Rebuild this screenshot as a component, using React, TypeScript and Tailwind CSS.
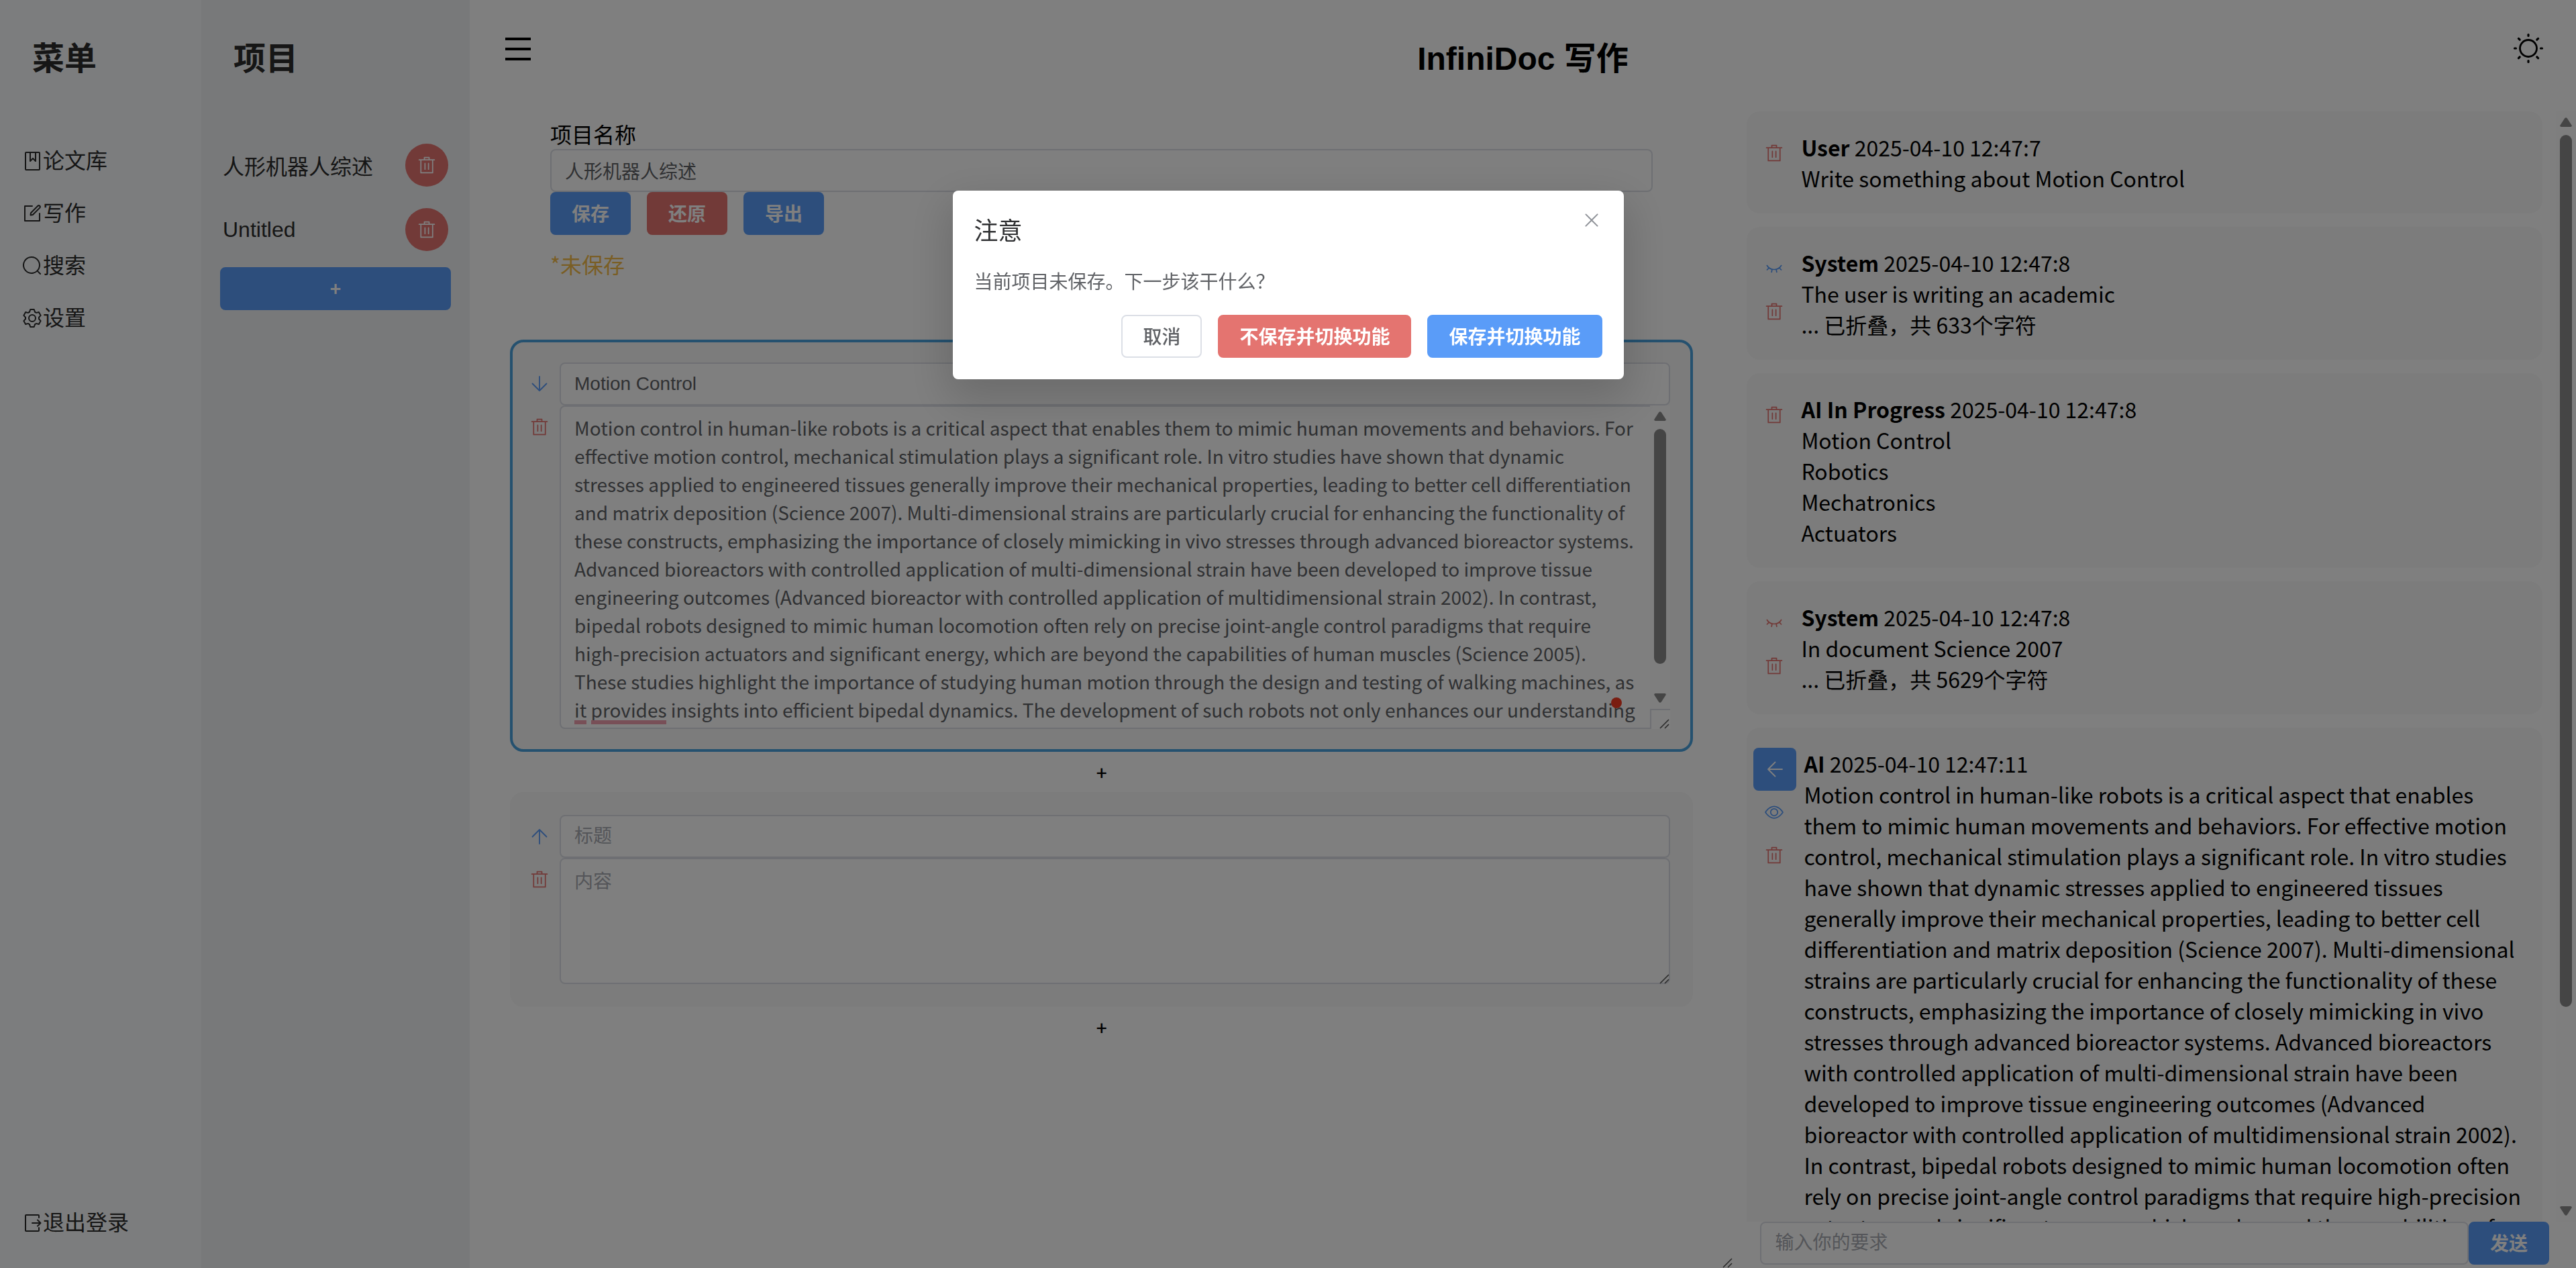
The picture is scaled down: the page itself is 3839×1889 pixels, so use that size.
import React from "react";

type IconProps = { className?: string };

function Glyph({ d, className = "size-7" }: IconProps & { d: string[] }) {
  return (
    <svg viewBox="0 0 1024 1024" className={className} fill="currentColor" aria-hidden="true">
      {d.map((p) => (
        <path key={p} d={p} />
      ))}
    </svg>
  );
}

const DELETE = [
  "M160 256H96a32 32 0 0 1 0-64h256V95.936a32 32 0 0 1 32-32h256a32 32 0 0 1 32 32V192h256a32 32 0 1 1 0 64h-64v672a32 32 0 0 1-32 32H192a32 32 0 0 1-32-32zm448-64v-64H416v64zM224 896h576V256H224zm192-128a32 32 0 0 1-32-32V416a32 32 0 0 1 64 0v320a32 32 0 0 1-32 32m192 0a32 32 0 0 1-32-32V416a32 32 0 0 1 64 0v320a32 32 0 0 1-32 32",
];
const EDIT = [
  "M832 512a32 32 0 1 1 64 0v352a32 32 0 0 1-32 32H160a32 32 0 0 1-32-32V160a32 32 0 0 1 32-32h352a32 32 0 0 1 0 64H192v640h640z",
  "m469.952 554.24 52.8-7.552L847.104 222.4a32 32 0 1 0-45.248-45.248L477.44 501.44l-7.552 52.8zm422.4-422.4a96 96 0 0 1 0 135.808l-331.84 331.84a32 32 0 0 1-18.112 9.088L436.8 623.68a32 32 0 0 1-36.224-36.224l15.104-105.6a32 32 0 0 1 9.024-18.112l331.904-331.84a96 96 0 0 1 135.744 0z",
];
const SEARCH = [
  "m795.904 750.72 124.992 124.928a32 32 0 0 1-45.248 45.248L750.656 795.904a416 416 0 1 1 45.248-45.248zM480 832a352 352 0 1 0 0-704 352 352 0 0 0 0 704",
];
const SETTING = [
  "M600.704 64a32 32 0 0 1 30.464 22.208l35.2 109.376c14.784 7.232 28.928 15.36 42.432 24.512l112.384-24.192a32 32 0 0 1 34.432 15.36L944.32 364.8a32 32 0 0 1-4.032 37.504l-77.12 85.12a357 357 0 0 1 0 49.024l77.12 85.248a32 32 0 0 1 4.032 37.504l-88.704 153.6a32 32 0 0 1-34.432 15.296L708.8 803.904c-13.44 9.088-27.648 17.28-42.368 24.512l-35.264 109.376A32 32 0 0 1 600.704 960H423.296a32 32 0 0 1-30.464-22.208L357.696 828.48a352 352 0 0 1-42.56-24.64l-112.32 24.256a32 32 0 0 1-34.432-15.36L79.68 659.2a32 32 0 0 1 4.032-37.504l77.12-85.248a357 357 0 0 1 0-48.896l-77.12-85.248A32 32 0 0 1 79.68 364.8l88.704-153.6a32 32 0 0 1 34.432-15.296l112.32 24.256c13.568-9.152 27.776-17.408 42.56-24.64l35.2-109.312A32 32 0 0 1 423.232 64H600.64zm-23.424 64H446.72l-36.352 113.088-24.512 11.968a294 294 0 0 0-34.816 20.096l-22.656 15.36-116.224-25.088-65.28 113.152 79.68 88.192-1.92 27.136a293 293 0 0 0 0 40.192l1.92 27.136-79.808 88.192 65.344 113.152 116.224-25.024 22.656 15.296a294 294 0 0 0 34.816 20.096l24.512 11.968L446.72 896h130.688l36.48-113.152 24.448-11.904a288 288 0 0 0 34.752-20.096l22.592-15.296 116.288 25.024 65.28-113.152-79.744-88.192 1.92-27.136a293 293 0 0 0 0-40.256l-1.92-27.136 79.808-88.128-65.344-113.152-116.288 24.96-22.592-15.232a288 288 0 0 0-34.752-20.096l-24.448-11.904L577.344 128zM512 320a192 192 0 1 1 0 384 192 192 0 0 1 0-384m0 64a128 128 0 1 0 0 256 128 128 0 0 0 0-256",
];
const VIEW = [
  "M512 160c320 0 512 352 512 352S832 864 512 864 0 512 0 512s192-352 512-352m0 64c-225.28 0-384.128 208.064-436.8 288 52.608 79.872 211.456 288 436.8 288 225.28 0 384.128-208.064 436.8-288-52.608-79.872-211.456-288-436.8-288m0 64a224 224 0 1 1 0 448 224 224 0 0 1 0-448m0 64a160.19 160.19 0 0 0-160 160c0 88.192 71.744 160 160 160s160-71.808 160-160-71.744-160-160-160",
];
const CLOSE = [
  "M764.288 214.592 512 466.88 259.712 214.592a31.936 31.936 0 0 0-45.12 45.12L466.752 512 214.528 764.224a31.936 31.936 0 1 0 45.12 45.184L512 557.184l252.288 252.288a31.936 31.936 0 0 0 45.12-45.12L557.12 512.064l252.288-252.352a31.936 31.936 0 1 0-45.12-45.184z",
];

const ARROWS = {
  down: "M14 3v21M3.500 13.500 14 24l10.500-10.500",
  up: "M14 25V4M3.500 14.500 14 4l10.500 10.500",
  left: "M25 14H4M14.500 3.500 4 14l10.500 10.500",
};

function ArrowIcon({ to }: { to: keyof typeof ARROWS }) {
  return (
    <svg viewBox="0 0 28 28" className="size-7" fill="none" stroke="currentColor" strokeWidth="1.800" strokeLinecap="round" strokeLinejoin="round" aria-hidden="true">
      <path d={ARROWS[to]} />
    </svg>
  );
}

function NotebookIcon() {
  return (
    <svg viewBox="0 0 32 32" className="size-8" fill="none" stroke="currentColor" strokeWidth="2" strokeLinejoin="round" aria-hidden="true">
      <rect x="6" y="3" width="21" height="26" rx="1" />
      <path d="M13 3v13l4-4 4 4V3" />
    </svg>
  );
}

function ExitIcon() {
  return (
    <svg viewBox="0 0 32 32" className="size-8" fill="none" stroke="currentColor" strokeWidth="2" strokeLinecap="round" strokeLinejoin="round" aria-hidden="true">
      <path d="M26 8V5a1 1 0 0 0-1-1H7a1 1 0 0 0-1 1v22a1 1 0 0 0 1 1h18a1 1 0 0 0 1-1v-4" />
      <path d="M16 16h12M24 11.500l4.500 4.500-4.500 4.500" />
    </svg>
  );
}

function ClosedEyeIcon() {
  return (
    <svg viewBox="0 0 28 28" className="size-7" fill="none" stroke="currentColor" strokeWidth="1.700" aria-hidden="true">
      <path d="M3 9c2.500 4.300 6.500 6.500 11 6.500S22.500 13.300 25 9" />
      <path d="M6.500 12.800 3 16.500M21.500 12.800l3.500 3.700M11 15l-1 5M17 15l1 5" />
    </svg>
  );
}

function SunIcon() {
  return (
    <svg viewBox="0 0 48 48" className="size-12" fill="none" stroke="currentColor" strokeLinecap="round" aria-hidden="true">
      <circle cx="24" cy="24" r="12.500" strokeWidth="2.800" />
      <path
        strokeWidth="3.200"
        d="M24 3.500v2M24 42.500v2M3.500 24h2M42.500 24h2M9.400 9.400l1.800 1.800M36.800 36.800l1.800 1.800M9.400 38.600l1.800-1.800M36.800 11.200l1.800-1.800"
      />
    </svg>
  );
}

function MenuIcon() {
  return (
    <svg viewBox="0 0 38 34" className="h-[34px] w-[38px]" fill="currentColor" aria-hidden="true">
      <rect y="0" width="38" height="4" />
      <rect y="15" width="38" height="4" />
      <rect y="30" width="38" height="4" />
    </svg>
  );
}

function Grip() {
  return (
    <svg viewBox="0 0 16 16" className="size-4 text-[#555]" fill="none" stroke="currentColor" strokeWidth="1.600" aria-hidden="true">
      <path d="M1 15 14 2M8 15l6-6" />
    </svg>
  );
}

function Arrow({ down = false }: { down?: boolean }) {
  return (
    <svg viewBox="0 0 18 14" className="h-[14px] w-[18px] shrink-0" fill="currentColor" aria-hidden="true">
      {down ? (
        <path d="M2 0h14q2.500.5 1.500 2.500l-6.500 10q-2 2.500-4 0l-6.500-10Q-.5.5 2 0z" />
      ) : (
        <path d="M2 14h14q2.500-.5 1.500-2.500L11 1.500q-2-2.500-4 0L.5 11.500Q-.5 13.500 2 14z" />
      )}
    </svg>
  );
}

function Scrollbar({ thumb }: { thumb: string }) {
  return (
    <div className="flex w-[30px] shrink-0 flex-1 flex-col items-center gap-3 bg-[#fcfcfc] py-[9px] text-[#8b8b8b]">
      <Arrow />
      <div className="flex w-[18px] flex-1 flex-col">
        <div className={`w-full rounded-full bg-[#8b8b8b] ${thumb}`} />
      </div>
      <Arrow down />
    </div>
  );
}

const sans = "font-['Liberation_Sans','Noto_Sans_CJK_SC',sans-serif]";
const cjk = "font-['Noto_Sans_CJK_SC',sans-serif]";

const field =
  "block w-full border-2 border-[#dcdfe6] bg-white px-5 text-[28px] text-[#606266] outline-none placeholder:text-[#a8abb2]";

function Button({ tone, className = "", children }: { tone: "primary" | "danger" | "plain"; className?: string; children: React.ReactNode }) {
  const tones = {
    primary: "border-[#5a9cf8] bg-[#5a9cf8] font-semibold text-white",
    danger: "border-[#e47470] bg-[#e47470] font-semibold text-white",
    plain: "border-[#dcdfe6] bg-white font-medium text-[#606266]",
  };
  return (
    <button
      type="button"
      className={`flex h-16 items-center justify-center rounded-lg border-2 px-[30px] pb-[3px] text-[28px] leading-none whitespace-nowrap ${cjk} ${tones[tone]} ${className}`}
    >
      {children}
    </button>
  );
}

function IconButton({ label, tone, children }: { label: string; tone: "blue" | "red"; children: React.ReactNode }) {
  return (
    <button
      type="button"
      aria-label={label}
      className={`flex h-16 w-full items-center justify-center ${tone === "blue" ? "text-[#5a9cf8]" : "text-[#e47470]"}`}
    >
      {children}
    </button>
  );
}

const menu = [
  { label: "论文库", icon: <NotebookIcon /> },
  { label: "写作", icon: <Glyph d={EDIT} className="size-8" /> },
  { label: "搜索", icon: <Glyph d={SEARCH} className="size-8" /> },
  { label: "设置", icon: <Glyph d={SETTING} className="size-8" /> },
];

const INTRO =
  "Motion control in human-like robots is a critical aspect that enables them to mimic human movements and behaviors. For effective motion control, mechanical stimulation plays a significant role. In vitro studies have shown that dynamic stresses applied to engineered tissues generally improve their mechanical properties, leading to better cell differentiation and matrix deposition (Science 2007). Multi-dimensional strains are particularly crucial for enhancing the functionality of these constructs, emphasizing the importance of closely mimicking in vivo stresses through advanced bioreactor systems. Advanced bioreactors with controlled application of multi-dimensional strain have been developed to improve tissue engineering outcomes (Advanced bioreactor with controlled application of multidimensional strain 2002). In contrast, bipedal robots designed to mimic human locomotion often rely on precise joint-angle control paradigms that require high-precision actuators and significant energy, which are beyond the capabilities of human muscles (Science 2005). These studies highlight the importance of studying human motion through the design and testing of walking machines, as it provides insights into efficient bipedal dynamics. The development of such robots not only enhances our understanding";

type Message = { role: string; time: string; lines: string[]; actions: React.ReactNode; wide?: boolean };

const trash = (
  <IconButton label="删除" tone="red">
    <Glyph d={DELETE} />
  </IconButton>
);

const messages: Message[] = [
  { role: "User", time: "2025-04-10 12:47:7", lines: ["Write something about Motion Control"], actions: trash },
  {
    role: "System",
    time: "2025-04-10 12:47:8",
    lines: ["The user is writing an academic", "... 已折叠，共 633个字符"],
    actions: (
      <>
        <IconButton label="展开" tone="blue">
          <ClosedEyeIcon />
        </IconButton>
        {trash}
      </>
    ),
  },
  {
    role: "AI In Progress",
    time: "2025-04-10 12:47:8",
    lines: ["Motion Control", "Robotics", "Mechatronics", "Actuators"],
    actions: trash,
  },
  {
    role: "System",
    time: "2025-04-10 12:47:8",
    lines: ["In document Science 2007", "... 已折叠，共 5629个字符"],
    actions: (
      <>
        <IconButton label="展开" tone="red">
          <ClosedEyeIcon />
        </IconButton>
        {trash}
      </>
    ),
  },
  {
    role: "AI",
    time: "2025-04-10 12:47:11",
    lines: [INTRO],
    wide: true,
    actions: (
      <>
        <button type="button" aria-label="插入" className="ml-[10px] flex size-16 items-center justify-center rounded-lg bg-[#5a9cf8] text-white">
          <ArrowIcon to="left" />
        </button>
        <IconButton label="折叠" tone="blue">
          <Glyph d={VIEW} />
        </IconButton>
        {trash}
      </>
    ),
  },
];

function MessageCard({ message }: { message: Message }) {
  return (
    <article className="flex shrink-0 rounded-[20px] bg-[#f8f8f8] py-[30px] pr-[30px]">
      <div className={`flex w-[81px] shrink-0 flex-col ${message.wide ? "mr-1" : ""}`}>{message.actions}</div>
      <div className={`min-w-0 flex-1 text-[32px] leading-[46px] text-black ${cjk}`}>
        <p>
          <b>{message.role}</b> {message.time}
        </p>
        {message.lines.map((line) => (
          <p key={line}>{line}</p>
        ))}
      </div>
    </article>
  );
}

function AddSection() {
  return (
    <button type="button" aria-label="添加段落" className={`flex h-[60px] w-full items-center justify-center text-[28px] leading-none font-medium text-black ${cjk}`}>
      +
    </button>
  );
}

function Sidebar() {
  return (
    <aside className="flex w-[300px] shrink-0 flex-col bg-[#f9fbfd] text-[#2c2c2c]">
      <h2 className="mt-[52px] px-12 text-[48px] leading-[72px] font-bold">菜单</h2>
      <nav className="mt-[93px] flex flex-1 flex-col gap-8 px-8 pb-11 text-[32px] leading-[46px]">
        {menu.map((item) => (
          <a key={item.label} href="#" className="flex items-center">
            {item.icon}
            {item.label}
          </a>
        ))}
        <a href="#" className="mt-auto flex items-center">
          <ExitIcon />
          退出登录
        </a>
      </nav>
    </aside>
  );
}

function Projects() {
  const projects = [
    { name: "人形机器人综述", font: cjk },
    { name: "Untitled", font: sans },
  ];
  return (
    <aside className="flex w-[400px] shrink-0 flex-col bg-[#f1f3f5] text-[#2c2c2c]">
      <h2 className="mt-[52px] px-12 text-[48px] leading-[72px] font-bold">项目</h2>
      <ul className="mt-[90px] flex flex-col gap-8 px-8 text-[32px] leading-[46px]">
        {projects.map(({ name, font }) => (
          <li key={name} className="flex h-16 items-center justify-between">
            <a href="#" className={font}>
              {name}
            </a>
            <button type="button" aria-label={`删除 ${name}`} className="flex size-16 items-center justify-center rounded-full bg-[#e47470] text-white">
              <Glyph d={DELETE} />
            </button>
          </li>
        ))}
      </ul>
      <Button tone="primary" className="mx-7 mt-6">
        +
      </Button>
    </aside>
  );
}

function Editor() {
  return (
    <section className="flex w-3/5 min-w-0 flex-col">
      <div className="px-[60px] pt-[10px]">
        <div className="px-[60px]">
          <label htmlFor="project-name" className={`block text-[32px] leading-[46px] text-black ${cjk}`}>
            项目名称
          </label>
          <input id="project-name" defaultValue="人形机器人综述" className={`${field} h-16 rounded-lg ${sans}`} />
          <div className="flex gap-6">
            <Button tone="primary">保存</Button>
            <Button tone="danger">还原</Button>
            <Button tone="primary">导出</Button>
          </div>
          <p className={`mt-5 text-[32px] leading-[46px] text-[#f5bd4a] ${cjk}`}>*未保存</p>
        </div>

        <div className="mt-[90px] flex rounded-[20px] border-4 border-[#4aa3df] bg-[#f8f8f8] py-[30px] pr-[30px] pl-[10px]">
          <div className="w-[60px] shrink-0">
            <IconButton label="下移" tone="blue">
              <ArrowIcon to="down" />
            </IconButton>
            {trash}
          </div>
          <div className="min-w-0 flex-1">
            <input aria-label="标题" defaultValue="Motion Control" className={`${field} h-16 rounded-lg ${sans}`} />
            <div className="relative flex h-[482px]">
              <textarea
                aria-label="内容"
                spellCheck={false}
                defaultValue={INTRO}
                className={`${field} h-full min-w-0 flex-1 resize-none overflow-hidden rounded-l-lg border-r-0 py-[10px] leading-[42px] ${cjk}`}
              />
              <div className="flex w-[30px] flex-col">
                <Scrollbar thumb="h-[350px]" />
                <div className="flex size-[30px] items-end justify-end border-t-2 border-l-2 border-[#dcdfe6] bg-white">
                  <Grip />
                </div>
              </div>
              <span className="absolute bottom-[7px] left-[22px] h-[6px] w-[18px] bg-[#f09fae]" />
              <span className="absolute bottom-[7px] left-[47px] h-[6px] w-[112px] bg-[#f09fae]" />
              <span className="absolute right-[72px] bottom-[31px] size-4 rounded-full bg-[#f43a22]" />
            </div>
          </div>
        </div>

        <AddSection />

        <div className="flex rounded-[20px] border-4 border-[#f8f8f8] bg-[#f8f8f8] py-[30px] pr-[30px] pl-[10px]">
          <div className="w-[60px] shrink-0">
            <IconButton label="上移" tone="blue">
              <ArrowIcon to="up" />
            </IconButton>
            {trash}
          </div>
          <div className="min-w-0 flex-1">
            <input aria-label="标题" placeholder="标题" className={`${field} h-16 rounded-lg ${sans}`} />
            <div className="relative">
              <textarea aria-label="内容" placeholder="内容" className={`${field} h-[188px] resize-none rounded-lg py-[10px] leading-[42px] ${cjk}`} />
              <span className="absolute right-0 bottom-0">
                <Grip />
              </span>
            </div>
          </div>
        </div>

        <AddSection />
      </div>
      <div className="mt-auto flex justify-end">
        <Grip />
      </div>
    </section>
  );
}

function Chat() {
  return (
    <section className="flex w-2/5 min-w-0 flex-col">
      <div className="flex min-h-0 flex-1">
        <div className="flex min-w-0 flex-1 flex-col gap-5 overflow-hidden px-5">
          {messages.map((message, i) => (
            <MessageCard key={i} message={message} />
          ))}
        </div>
        <div className="flex">
          <div className="flex w-[30px] flex-col">
            <Scrollbar thumb="h-[82%]" />
          </div>
        </div>
      </div>
      <form className="flex px-10 pb-[5px]">
        <input aria-label="输入你的要求" placeholder="输入你的要求" className={`${field} h-16 min-w-0 flex-1 rounded-lg ${sans}`} />
        <Button tone="primary">发送</Button>
      </form>
    </section>
  );
}

function SwitchDialog() {
  return (
    <div className="fixed inset-0 z-10 flex items-start justify-center bg-black/50 pt-[284px]">
      <div
        role="dialog"
        aria-modal="true"
        aria-labelledby="dialog-title"
        className={`relative w-[1000px] rounded-lg bg-white p-8 shadow-[0_24px_64px_8px_rgba(0,0,0,0.16)] ${cjk}`}
      >
        <h3 id="dialog-title" className="text-[36px] leading-[50px] text-[#303133]">
          注意
        </h3>
        <button type="button" aria-label="关闭" className="absolute top-0 right-0 flex h-[88px] w-24 items-center justify-center text-[#909399]">
          <Glyph d={CLOSE} className="size-8" />
        </button>
        <p className="mt-8 text-[28px] leading-[40px] text-[#606266]">当前项目未保存。下一步该干什么？</p>
        <div className="mt-[31px] flex justify-end gap-6">
          <Button tone="plain">取消</Button>
          <Button tone="danger">不保存并切换功能</Button>
          <Button tone="primary">保存并切换功能</Button>
        </div>
      </div>
    </div>
  );
}

export default function App() {
  return (
    <div className={`flex h-screen overflow-hidden bg-white ${sans}`}>
      <Sidebar />
      <Projects />
      <main className="flex min-w-0 flex-1 flex-col">
        <header className="grid h-[166px] shrink-0 grid-cols-[1fr_auto_1fr] items-start text-black">
          <button type="button" aria-label="菜单" className="mt-14 ml-[53px] justify-self-start">
            <MenuIcon />
          </button>
          <h1 className="mt-[52px] text-[48px] leading-[72px] font-bold">InfiniDoc 写作</h1>
          <button type="button" aria-label="切换主题" className="mt-12 mr-[47px] justify-self-end">
            <SunIcon />
          </button>
        </header>
        <div className="flex min-h-0 flex-1">
          <Editor />
          <Chat />
        </div>
      </main>
      <SwitchDialog />
    </div>
  );
}
